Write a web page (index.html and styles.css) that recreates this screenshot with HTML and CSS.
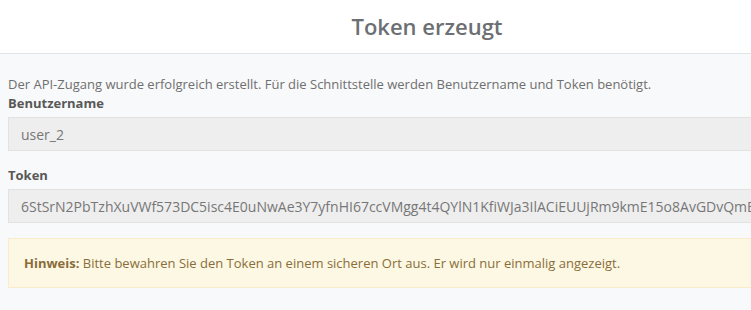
FILE: index.html
```html
<!DOCTYPE html>
<html lang="de">
<head>
  <meta charset="UTF-8" />
  <meta name="viewport" content="width=device-width, initial-scale=1.0" />
  <title>Token erzeugt</title>
  <link rel="stylesheet" href="styles.css">
</head>
<body>
  <div class="modal">
    <header class="modal-header">
      <h1>Token erzeugt</h1>
    </header>

    <main class="modal-body">
      <p class="intro">Der API-Zugang wurde erfolgreich erstellt. Für die Schnittstelle werden Benutzername und Token benötigt.</p>

      <div class="field">
        <label for="username">Benutzername</label>
        <input id="username" type="text" value="user_2" readonly>
      </div>

      <div class="field">
        <label for="token">Token</label>
        <input id="token" type="text" value="6StSrN2PbTzhXuVWf573DC5isc4E0uNwAe3Y7yfnHI67ccVMgg4t4QYlN1KfiWJa3IlACiEUUjRm9kmE15o8AvGDvQmBx2" readonly>
      </div>

      <div class="alert">
        <strong>Hinweis:</strong> Bitte bewahren Sie den Token an einem sicheren Ort aus. Er wird nur einmalig angezeigt.
      </div>
    </main>
  </div>
</body>
</html>
```

FILE: styles.css
```css
* {
  margin: 0;
  padding: 0;
  box-sizing: border-box;
}

html, body {
  overflow: hidden;
}

body {
  font-family: 'Open Sans', 'Noto Sans', sans-serif;
  color: #6f6f6f;
  background-color: #f8f9fa;
  min-height: 100vh;
}

.modal {
  width: 854px;
}

.modal-header {
  background: #ffffff;
  height: 54px;
  border-bottom: 1px solid #e1e4e7;
  display: flex;
  align-items: center;
  justify-content: center;
}

.modal-header h1 {
  font-size: 22px;
  font-weight: 600;
  color: #6c6f73;
  padding-bottom: 1px;
}

.modal-body {
  padding: 21px 8px 20px;
}

.intro {
  font-size: 13px;
  line-height: 18px;
  margin-bottom: 1px;
}

.field {
  margin-bottom: 15px;
}

.field label {
  display: block;
  font-size: 13px;
  font-weight: 700;
  line-height: 18px;
  color: #585858;
  margin-bottom: 5px;
}

.field input {
  display: block;
  width: 100%;
  height: 34px;
  padding: 0 12px;
  font-family: inherit;
  font-size: 14px;
  color: #777777;
  background: #eeeeee;
  border: 1px solid #e2e2e2;
  border-radius: 0;
  outline: none;
}

.alert {
  padding: 15px 15px;
  font-size: 13px;
  line-height: 18px;
  color: #8a6d3b;
  background: #fcf8e3;
  border: 1px solid #faebcc;
}

.alert strong {
  font-weight: 700;
}
```
